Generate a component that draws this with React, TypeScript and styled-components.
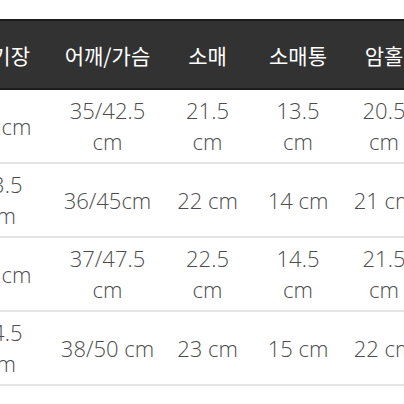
import React from "react";
import styled, { createGlobalStyle } from "styled-components";

const columns = ["총기장", "어깨/가슴", "소매", "소매통", "암홀"];

const rows: string[][][] = [
    [["63 cm"], ["35/42.5", "cm"], ["21.5", "cm"], ["13.5", "cm"], ["20.5", "cm"]],
    [["63.5", "cm"], ["36/45cm"], ["22 cm"], ["14 cm"], ["21 cm"]],
    [["64 cm"], ["37/47.5", "cm"], ["22.5", "cm"], ["14.5", "cm"], ["21.5", "cm"]],
    [["64.5", "cm"], ["38/50 cm"], ["23 cm"], ["15 cm"], ["22 cm"]],
];

const App = () => {
    return (
        <Page>
            <GlobalStyle />
            <Table>
                <HeaderRow>
                    {columns.map(name => (
                        <HeadCell key={name}>{name}</HeadCell>
                    ))}
                </HeaderRow>
                {rows.map((row, i) => (
                    <BodyRow key={i}>
                        {row.map((lines, j) => (
                            <Cell key={j}>
                                {lines.map(line => (
                                    <Line key={line}>{line}</Line>
                                ))}
                            </Cell>
                        ))}
                    </BodyRow>
                ))}
            </Table>
        </Page>
    );
};

export default App;

const GlobalStyle = createGlobalStyle`
    body {
        margin: 0;
        background: #fff;
    }
`;

const Page = styled.div`
    width: 404px;
    height: 404px;
    overflow: hidden;
    background: #fff;
    padding-top: 19px;
    box-sizing: border-box;
`;

const Table = styled.div`
    display: flex;
    flex-direction: column;
    margin-left: -53px;
    width: 520px;
`;

const Row = styled.div`
    display: grid;
    grid-template-columns: 108px 105px 95px 86px 86px;
    height: 74px;
    box-sizing: border-box;
`;

const HeaderRow = styled(Row)`
    height: 71px;
    background: #323232;
    border-top: 2px solid #1c1c1c;
    border-bottom: 2px solid #1c1c1c;
`;

const BodyRow = styled(Row)`
    border-bottom: 2px solid #e4e4e4;
`;

const HeadCell = styled.div`
    display: flex;
    align-items: center;
    justify-content: center;
    color: #fff;
    font-family: "Noto Sans CJK KR", "Noto Sans", sans-serif;
    font-size: 21px;
    white-space: nowrap;
`;

const Cell = styled.div`
    display: flex;
    flex-direction: column;
    align-items: center;
    justify-content: center;
    color: #4c4c4c;
    font-family: "Open Sans", "Noto Sans", sans-serif;
    font-size: 22px;
    font-weight: 300;
    line-height: 31px;
    white-space: nowrap;
`;

const Line = styled.span``;
